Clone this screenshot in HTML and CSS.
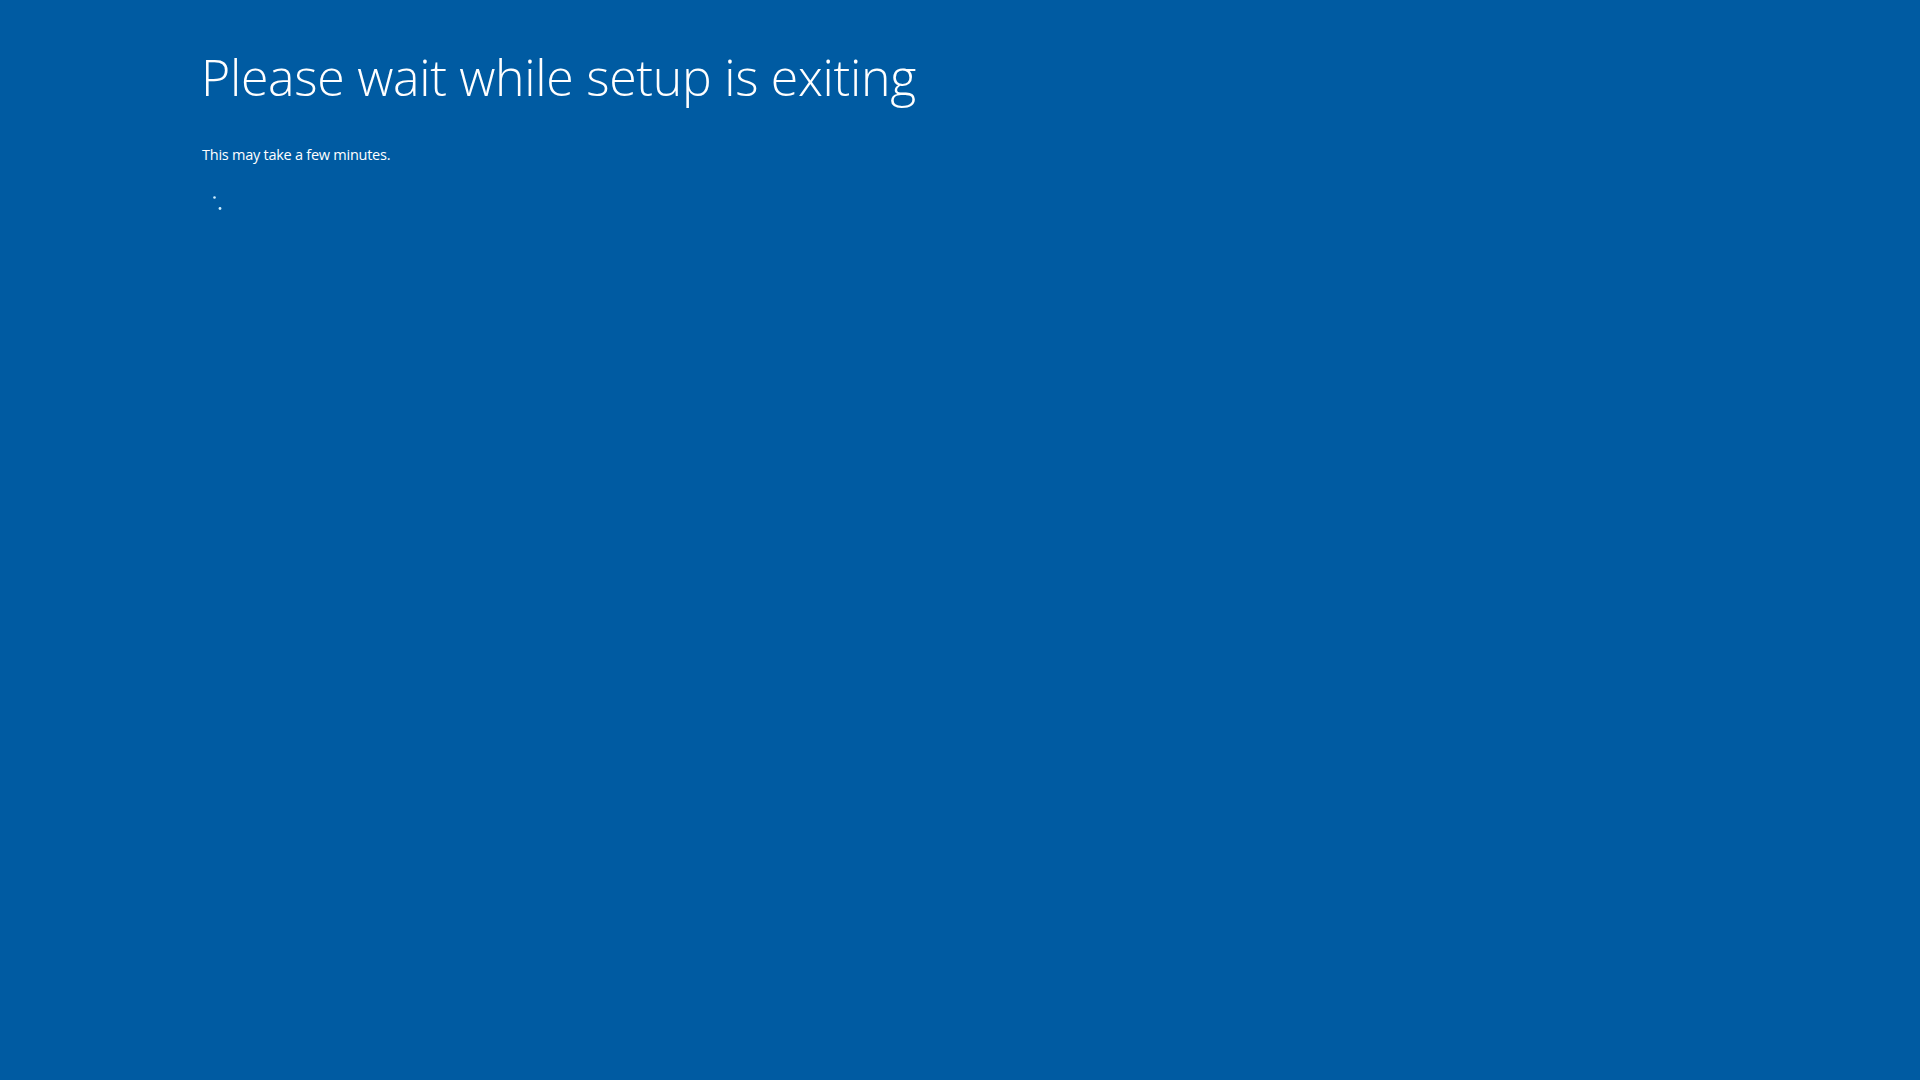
FILE: index.html
```html
<!DOCTYPE html>
<html lang="en">
<head>
<meta charset="utf-8">
<title>Setup</title>
<link rel="stylesheet" href="styles.css">
</head>
<body>
<main class="setup">
  <h1 class="title">Please wait while setup is exiting</h1>
  <p class="subtitle">This may take a few minutes.</p>
  <div class="spinner">
    <svg width="30" height="30" viewBox="0 0 30 30" aria-hidden="true">
      <circle cx="10.5" cy="6.5" r="1.3" class="dot"/>
      <circle cx="16" cy="17.5" r="1.4" class="dot"/>
    </svg>
  </div>
</main>
</body>
</html>
```
FILE: styles.css
```css
html, body {
  margin: 0;
  padding: 0;
  height: 100%;
}
body {
  background: #005ba2;
  color: #ffffff;
  font-family: "Open Sans", "Noto Sans", "DejaVu Sans", sans-serif;
  overflow: hidden;
}
.setup {
  padding: 43px 0 0 201px;
  display: flex;
  flex-direction: column;
  align-items: flex-start;
}
.title {
  margin: 0;
  font-size: 50px;
  line-height: 68px;
  font-weight: 300;
  letter-spacing: -0.3px;
}
.subtitle {
  margin: 33px 0 0 1px;
  font-size: 14.5px;
  line-height: 22px;
  font-weight: 400;
  letter-spacing: -0.25px;
}
.spinner {
  margin: 25px 0 0 3px;
  width: 30px;
  height: 30px;
}
.dot {
  fill: #cfeeff;
}
```
